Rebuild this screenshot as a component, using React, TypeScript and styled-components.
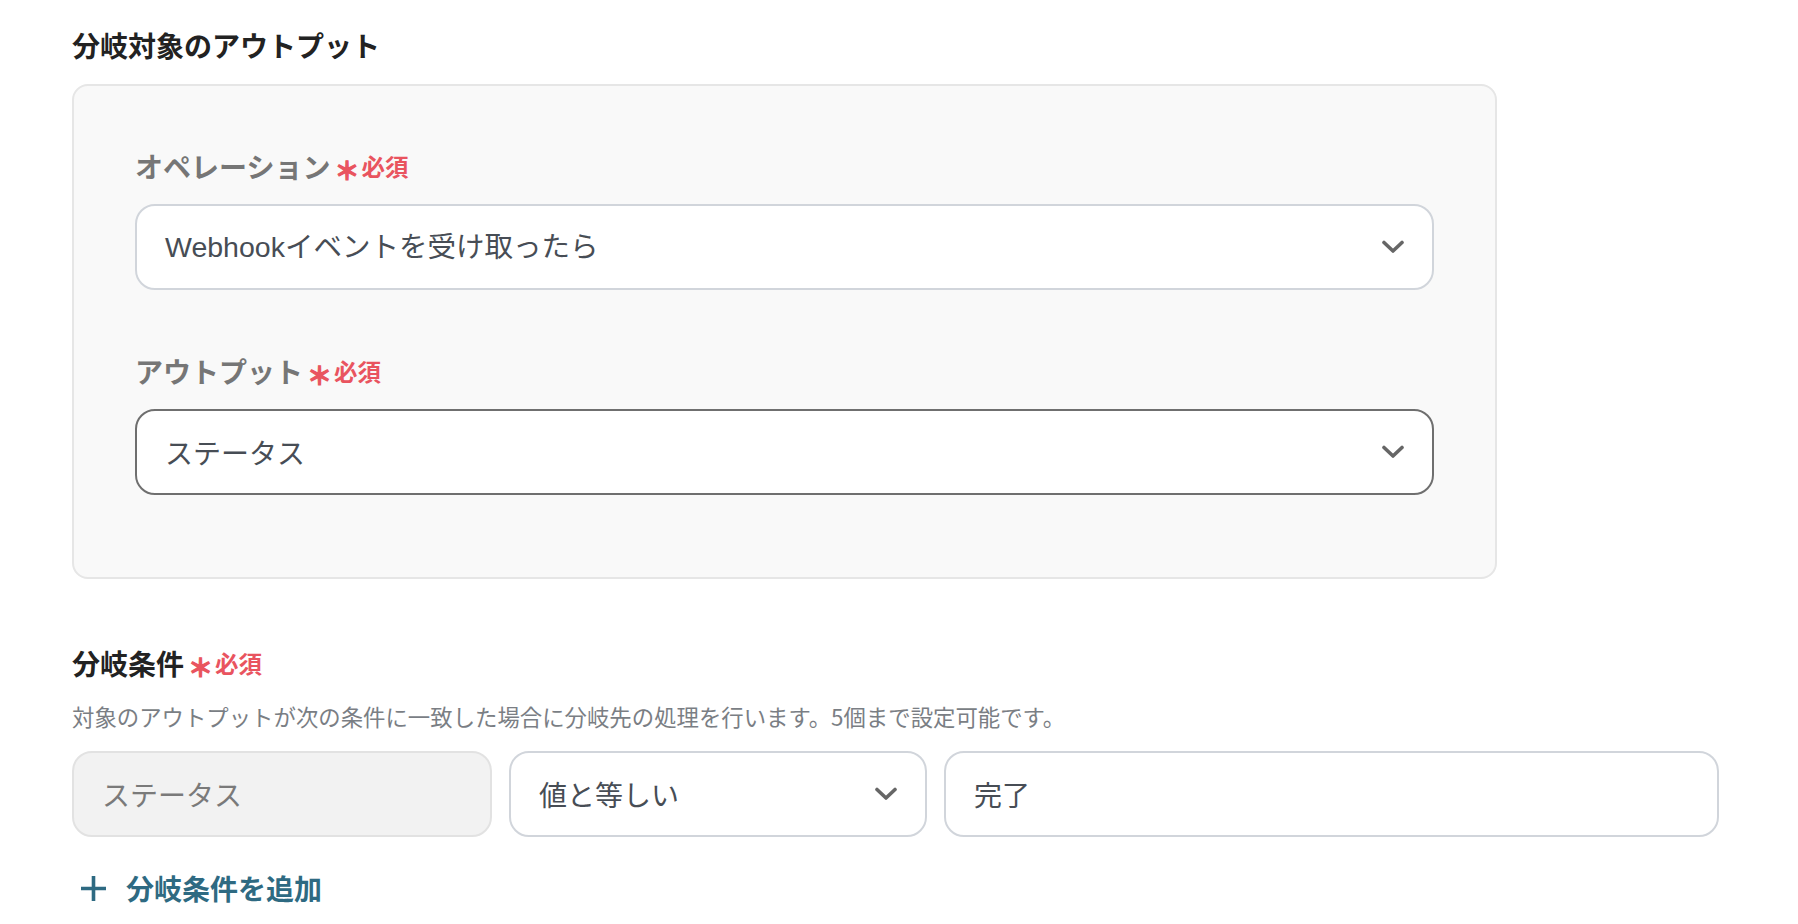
import React from "react";
import styled, { createGlobalStyle } from "styled-components";

const GlobalStyle = createGlobalStyle`
  html, body {
    margin: 0;
    padding: 0;
    background: #ffffff;
  }
  body {
    font-family: "Noto Sans CJK JP", "Noto Sans", sans-serif;
    color: #222222;
  }
  * { box-sizing: border-box; }
`;

const Page = styled.div`
  padding: 25px 0 40px 72px;
  display: flex;
  flex-direction: column;
  align-items: flex-start;
`;

const SectionTitle = styled.div<{ $mt?: number }>`
  display: flex;
  align-items: center;
  font-size: 28px;
  line-height: 40px;
  font-weight: 700;
  color: #222222;
  margin-top: ${(p) => p.$mt ?? 0}px;
`;

const Panel = styled.div`
  margin-top: 19px;
  width: 1425px;
  background: #f9f9f9;
  border: 2px solid #e6e6e6;
  border-radius: 16px;
  padding: 60px 61px 82px 61px;
  display: flex;
  flex-direction: column;
`;

const Field = styled.div<{ $mt?: number }>`
  display: flex;
  flex-direction: column;
  gap: 18px;
  margin-top: ${(p) => p.$mt ?? 0}px;
`;

const Label = styled.div`
  display: flex;
  align-items: center;
  font-size: 28px;
  line-height: 40px;
  font-weight: 700;
  color: #767676;
`;

const Required = styled.span`
  display: inline-flex;
  align-items: center;
  margin-left: 4px;
  color: #e9545f;
  font-size: 23.5px;
  font-weight: 700;
`;

const Star = styled.span`
  font-size: 25px;
  margin-right: 2px;
  position: relative;
  top: 3px;
  -webkit-text-stroke: 1.2px #e9545f;
`;

const SelectBox = styled.div<{ $active?: boolean }>`
  display: flex;
  align-items: center;
  justify-content: space-between;
  height: 86px;
  width: 100%;
  background: #ffffff;
  border: 2px solid ${(p) => (p.$active ? "#6f6f6f" : "#d1d5db")};
  border-radius: 20px;
  padding: 0 28px 0 28px;
  font-size: 28px;
  color: #474d55;
`;

const ValueText = styled.span<{ $latin?: boolean }>`
  font-family: ${(p) =>
    p.$latin
      ? `"Liberation Sans", "Noto Sans CJK JP", sans-serif`
      : `"Noto Sans CJK JP", sans-serif`};
  font-size: ${(p) => (p.$latin ? "28.5px" : "28px")};
  line-height: 40px;
`;

const Description = styled.div`
  margin-top: 17px;
  font-size: 22.4px;
  line-height: 32px;
  color: #7a7e84;
`;

const ConditionRow = styled.div`
  margin-top: 19px;
  width: 1647px;
  display: grid;
  grid-template-columns: 420px 418px 1fr;
  gap: 17px;
`;

const StaticBox = styled.div`
  display: flex;
  align-items: center;
  height: 86px;
  background: #f2f2f2;
  border: 2px solid #e2e2e2;
  border-radius: 20px;
  padding: 0 28px;
  font-size: 28px;
  color: #7a7a7a;
`;

const TextBox = styled.div`
  display: flex;
  align-items: center;
  height: 86px;
  background: #ffffff;
  border: 2px solid #d1d5db;
  border-radius: 20px;
  padding: 0 28px;
  font-size: 28px;
  color: #474d55;
`;

const AddButton = styled.button`
  margin-top: 31px;
  display: flex;
  align-items: center;
  gap: 20px;
  background: none;
  border: none;
  padding: 0 0 0 9px;
  font-family: "Noto Sans CJK JP", sans-serif;
  font-size: 28px;
  line-height: 40px;
  font-weight: 700;
  color: #2e6a82;
  cursor: pointer;
`;

const Chevron = () => (
  <svg width="22" height="14" viewBox="0 0 22 14" fill="none">
    <path
      d="M2 2.5 L11 11 L20 2.5"
      stroke="#666666"
      strokeWidth="3.6"
      strokeLinecap="round"
      strokeLinejoin="round"
    />
  </svg>
);

const Plus = () => (
  <svg width="25" height="25" viewBox="0 0 25 25" fill="none">
    <path d="M12.5 1 V24 M1 12.5 H24" stroke="#2e6a82" strokeWidth="3.6" strokeLinecap="square" />
  </svg>
);

const RequiredMark = () => (
  <Required>
    <Star>＊</Star>
    必須
  </Required>
);

export default function App() {
  return (
    <>
      <GlobalStyle />
      <Page>
        <SectionTitle>分岐対象のアウトプット</SectionTitle>
        <Panel>
          <Field>
            <Label>
              オペレーション
              <RequiredMark />
            </Label>
            <SelectBox>
              <ValueText $latin>Webhookイベントを受け取ったら</ValueText>
              <Chevron />
            </SelectBox>
          </Field>
          <Field $mt={61}>
            <Label>
              アウトプット
              <RequiredMark />
            </Label>
            <SelectBox $active>
              <ValueText>ステータス</ValueText>
              <Chevron />
            </SelectBox>
          </Field>
        </Panel>

        <SectionTitle $mt={64}>
          分岐条件
          <RequiredMark />
        </SectionTitle>
        <Description>
          対象のアウトプットが次の条件に一致した場合に分岐先の処理を行います。5個まで設定可能です。
        </Description>
        <ConditionRow>
          <StaticBox>
            <ValueText>ステータス</ValueText>
          </StaticBox>
          <SelectBox>
            <ValueText>値と等しい</ValueText>
            <Chevron />
          </SelectBox>
          <TextBox>
            <ValueText>完了</ValueText>
          </TextBox>
        </ConditionRow>
        <AddButton type="button">
          <Plus />
          分岐条件を追加
        </AddButton>
      </Page>
    </>
  );
}
